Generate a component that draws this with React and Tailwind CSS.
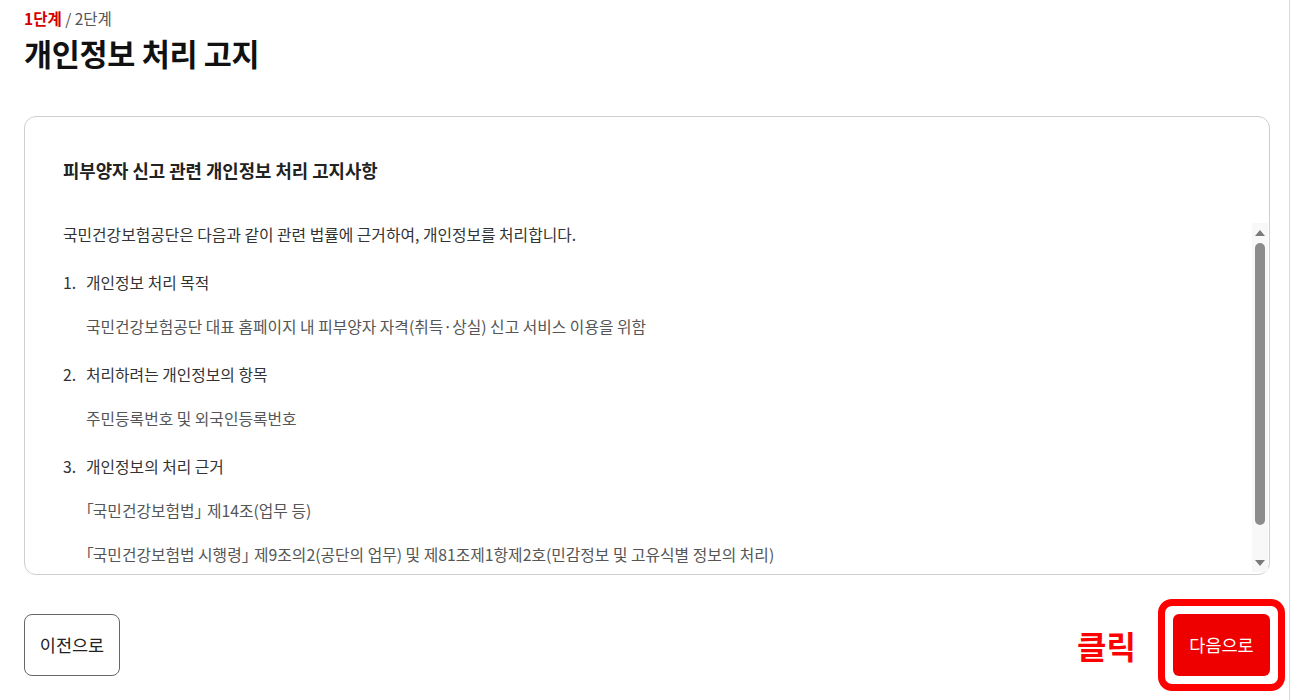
import { useState } from 'react';

const font = { fontFamily: '"Noto Sans CJK KR", "Noto Sans", sans-serif' };

const sections = [
  { title: '개인정보 처리 목적', lines: ['국민건강보험공단 대표 홈페이지 내 피부양자 자격(취득·상실) 신고 서비스 이용을 위함'] },
  { title: '처리하려는 개인정보의 항목', lines: ['주민등록번호 및 외국인등록번호'] },
  {
    title: '개인정보의 처리 근거',
    lines: [
      ['국민건강보험법', ' 제14조(업무 등)'],
      ['국민건강보험법 시행령', ' 제9조의2(공단의 업무) 및 제81조제1항제2호(민감정보 및 고유식별 정보의 처리)'],
    ],
  },
];

// law names are wrapped in tight corner brackets
function Line({ value }) {
  if (typeof value === 'string') return value;
  return (
    <>
      <span className="-ml-[8px] -mr-[1px]">「</span>
      {value[0]}
      <span className="tracking-[-7px]">」</span>
      {value[1]}
    </>
  );
}

function Scrollbar() {
  return (
    <div className="w-[16px] shrink-0 bg-[#f8f8f8] flex flex-col items-center pt-[7px] pb-[6px]">
      <div className="w-0 h-0 border-l-[5px] border-r-[5px] border-b-[6px] border-l-transparent border-r-transparent border-b-[#7a7a7a]" />
      <div className="mt-[7px] w-[10px] h-[282px] rounded-full bg-[#8c8c8c]" />
      <div className="flex-1" />
      <div className="w-0 h-0 border-l-[5px] border-r-[5px] border-t-[6px] border-l-transparent border-r-transparent border-t-[#7a7a7a]" />
    </div>
  );
}

export default function App() {
  const [step] = useState(1);

  return (
    <div style={font} className="w-[1290px] h-[700px] bg-white border-r border-[#d9d9d9] pl-[24px] pr-[19px] pt-[7px] overflow-hidden">
      {/* step indicator */}
      <div className="text-[15.5px] leading-[22px] text-[#555]">
        <span className={step === 1 ? 'font-bold text-[#d40000]' : ''}>1단계</span>
        <span> / 2단계</span>
      </div>
      <h1 className="mt-[5px] text-[30.5px] leading-[38px] font-bold text-[#111] tracking-[-0.3px]">개인정보 처리 고지</h1>

      {/* notice box */}
      <div className="mt-[44px] h-[459px] rounded-[12px] border border-[#cfcfcf] flex flex-col pl-[38px] pr-[1px] pb-[2px] pt-[41px]">
        <h2 className="text-[17.8px] leading-[24px] font-bold text-[#222]">피부양자 신고 관련 개인정보 처리 고지사항</h2>
        <div className="mt-[41px] flex-1 min-h-0 flex">
          <div className="flex-1 overflow-hidden text-[15.8px] leading-[24px] text-[#333]">
            <p>국민건강보험공단은 다음과 같이 관련 법률에 근거하여, 개인정보를 처리합니다.</p>
            {sections.map((s, i) => (
              <div key={i} className="mt-[24px]">
                <p className="flex">
                  <span className="w-[23px]">{i + 1}.</span>
                  <span>{s.title}</span>
                </p>
                {s.lines.map((line, j) => (
                  <p key={j} className="mt-[20px] pl-[23px] text-[#555]">
                    <Line value={line} />
                  </p>
                ))}
              </div>
            ))}
          </div>
          <Scrollbar />
        </div>
      </div>

      {/* buttons */}
      <div className="mt-[39px] flex items-center justify-between">
        <button className="w-[96px] h-[62px] rounded-[8px] border border-[#666] bg-white text-[17.5px] text-[#222]">이전으로</button>
        <div className="flex items-center gap-[37px]">
          <span className="text-[32px] font-bold text-[#ff0000] leading-none">클릭</span>
          <div className="relative">
            {/* highlight ring */}
            <div className="absolute -inset-[15px] rounded-[14px] border-[7px] border-[#ff0000] pointer-events-none" />
            <button className="w-[97px] h-[62px] rounded-[6px] bg-[#ee0000] text-[17.5px] text-white">다음으로</button>
          </div>
        </div>
      </div>
    </div>
  );
}
